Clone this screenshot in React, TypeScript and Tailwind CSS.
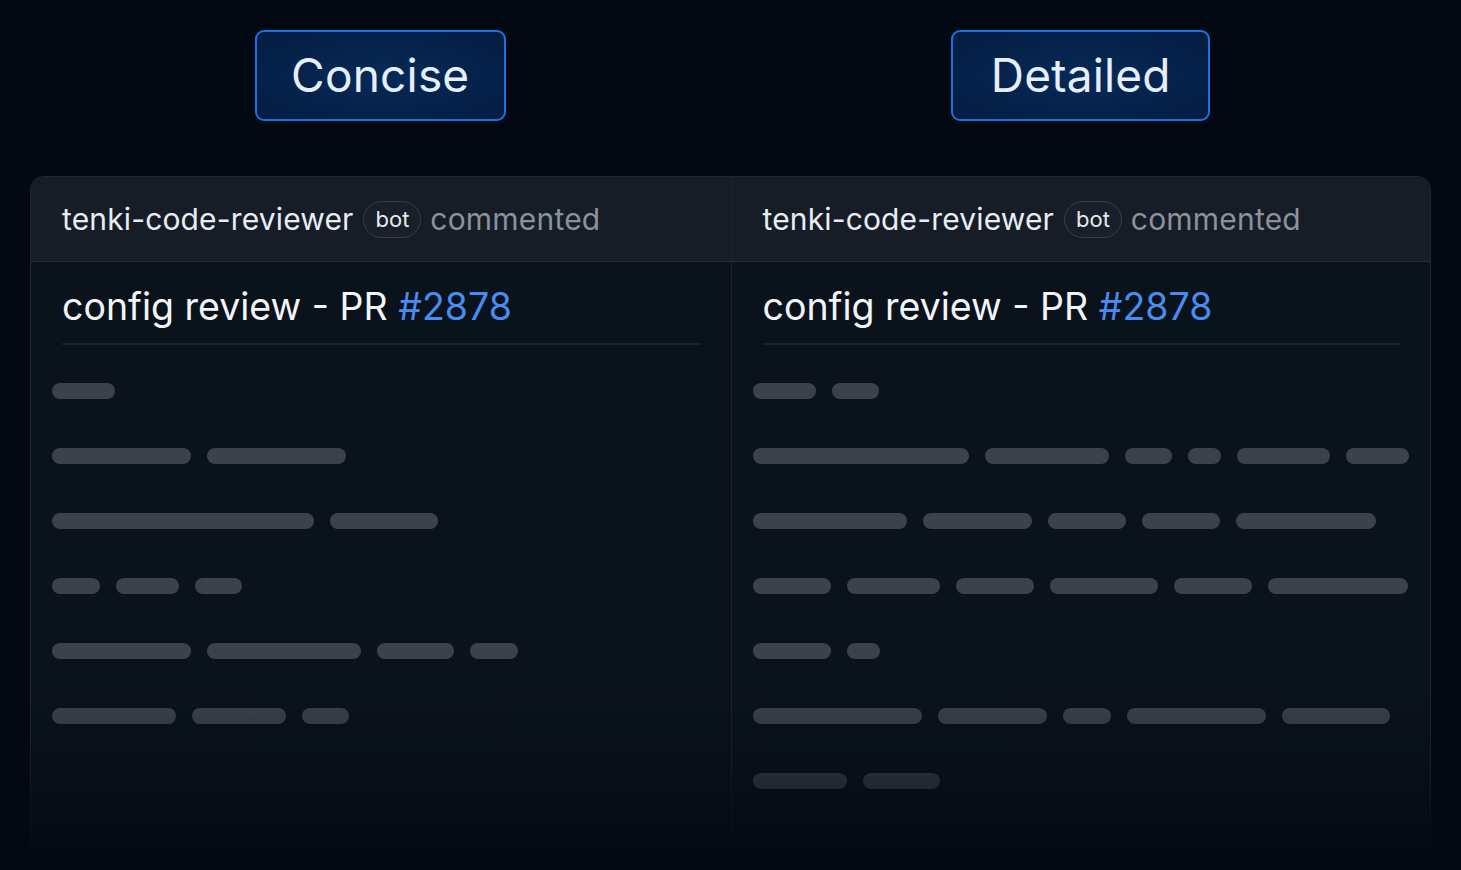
import React from "react";

const leftRows: number[][] = [
  [63],
  [139, 139],
  [262, 108],
  [48, 63, 47],
  [139, 154, 77, 48],
  [124, 94, 47],
];

const rightRows: number[][] = [
  [63, 47],
  [216, 124, 47, 33, 93, 63],
  [154, 109, 78, 78, 140],
  [78, 93, 78, 108, 78, 140],
  [78, 33],
  [169, 109, 48, 139, 108],
  [94, 77],
];

function ModeButton({ label, width }: { label: string; width: number }) {
  return (
    <div className="flex justify-center">
      <div
        className="h-[91px] flex items-center justify-center rounded-[9px] border-[2.5px] border-[#1b72e4] bg-[radial-gradient(ellipse_at_center,#072a57_0%,#05214a_60%,#041d42_100%)] text-[46px] text-[#e4efff] tracking-[0.2px]"
        style={{ width }}
      >
        {label}
      </div>
    </div>
  );
}

function Column({ rows, divider }: { rows: number[][]; divider?: boolean }) {
  return (
    <div className={divider ? "flex flex-col border-l border-[#1c232d]" : "flex flex-col"}>
      <div className="h-[85px] flex items-center pl-[31px] bg-[#161d27] border-b border-[#232b36]">
        <span className="text-[30px] text-[#e8edf3] tracking-[0.15px]">tenki-code-reviewer</span>
        <span className="ml-[10px] h-[37px] px-[11px] flex items-center rounded-full border-[1.5px] border-[#363e49] bg-[#19202a] text-[22px] text-[#e6ebf1]">
          bot
        </span>
        <span className="ml-[9px] text-[30px] text-[#8a929c] tracking-[0.2px]">commented</span>
      </div>
      <div className="flex flex-col pl-[21px] pr-[18px] pt-[22px] h-[600px]">
        <div className="ml-[10px] mr-[12px] pb-[13px] border-b-2 border-[#19212b] text-[37.5px] leading-[46px] text-[#f2f5f8]">
          config review - PR <span className="text-[#4a8bef]">#2878</span>
        </div>
        <div className="flex flex-col gap-[49px] mt-[38px]">
          {rows.map((row, i) => (
            <div key={i} className="flex gap-[16px]">
              {row.map((w, j) => (
                <div key={j} className="h-[16px] shrink-0 rounded-full bg-[#3b424c]" style={{ width: w }} />
              ))}
            </div>
          ))}
        </div>
      </div>
    </div>
  );
}

export default function App() {
  return (
    <div
      className="w-[1461px] h-[870px] overflow-hidden bg-[#020912] px-[30px] pt-[30px]"
      style={{ fontFamily: "Inter, 'Noto Sans', sans-serif" }}
    >
      <div className="grid grid-cols-2">
        <ModeButton label="Concise" width={251} />
        <ModeButton label="Detailed" width={259} />
      </div>
      <div className="relative mt-[55px]">
        <div className="rounded-t-[14px] border border-b-0 border-[#1e2631] overflow-hidden bg-[#0a121c]">
          <div className="grid grid-cols-2">
            <Column rows={leftRows} />
            <Column rows={rightRows} divider />
          </div>
        </div>
        <div className="absolute -left-[2px] -right-[2px] top-[520px] h-[180px] bg-gradient-to-b from-[#02091200] via-[#0209128c] via-60% to-[#020912] to-90%" />
      </div>
    </div>
  );
}
